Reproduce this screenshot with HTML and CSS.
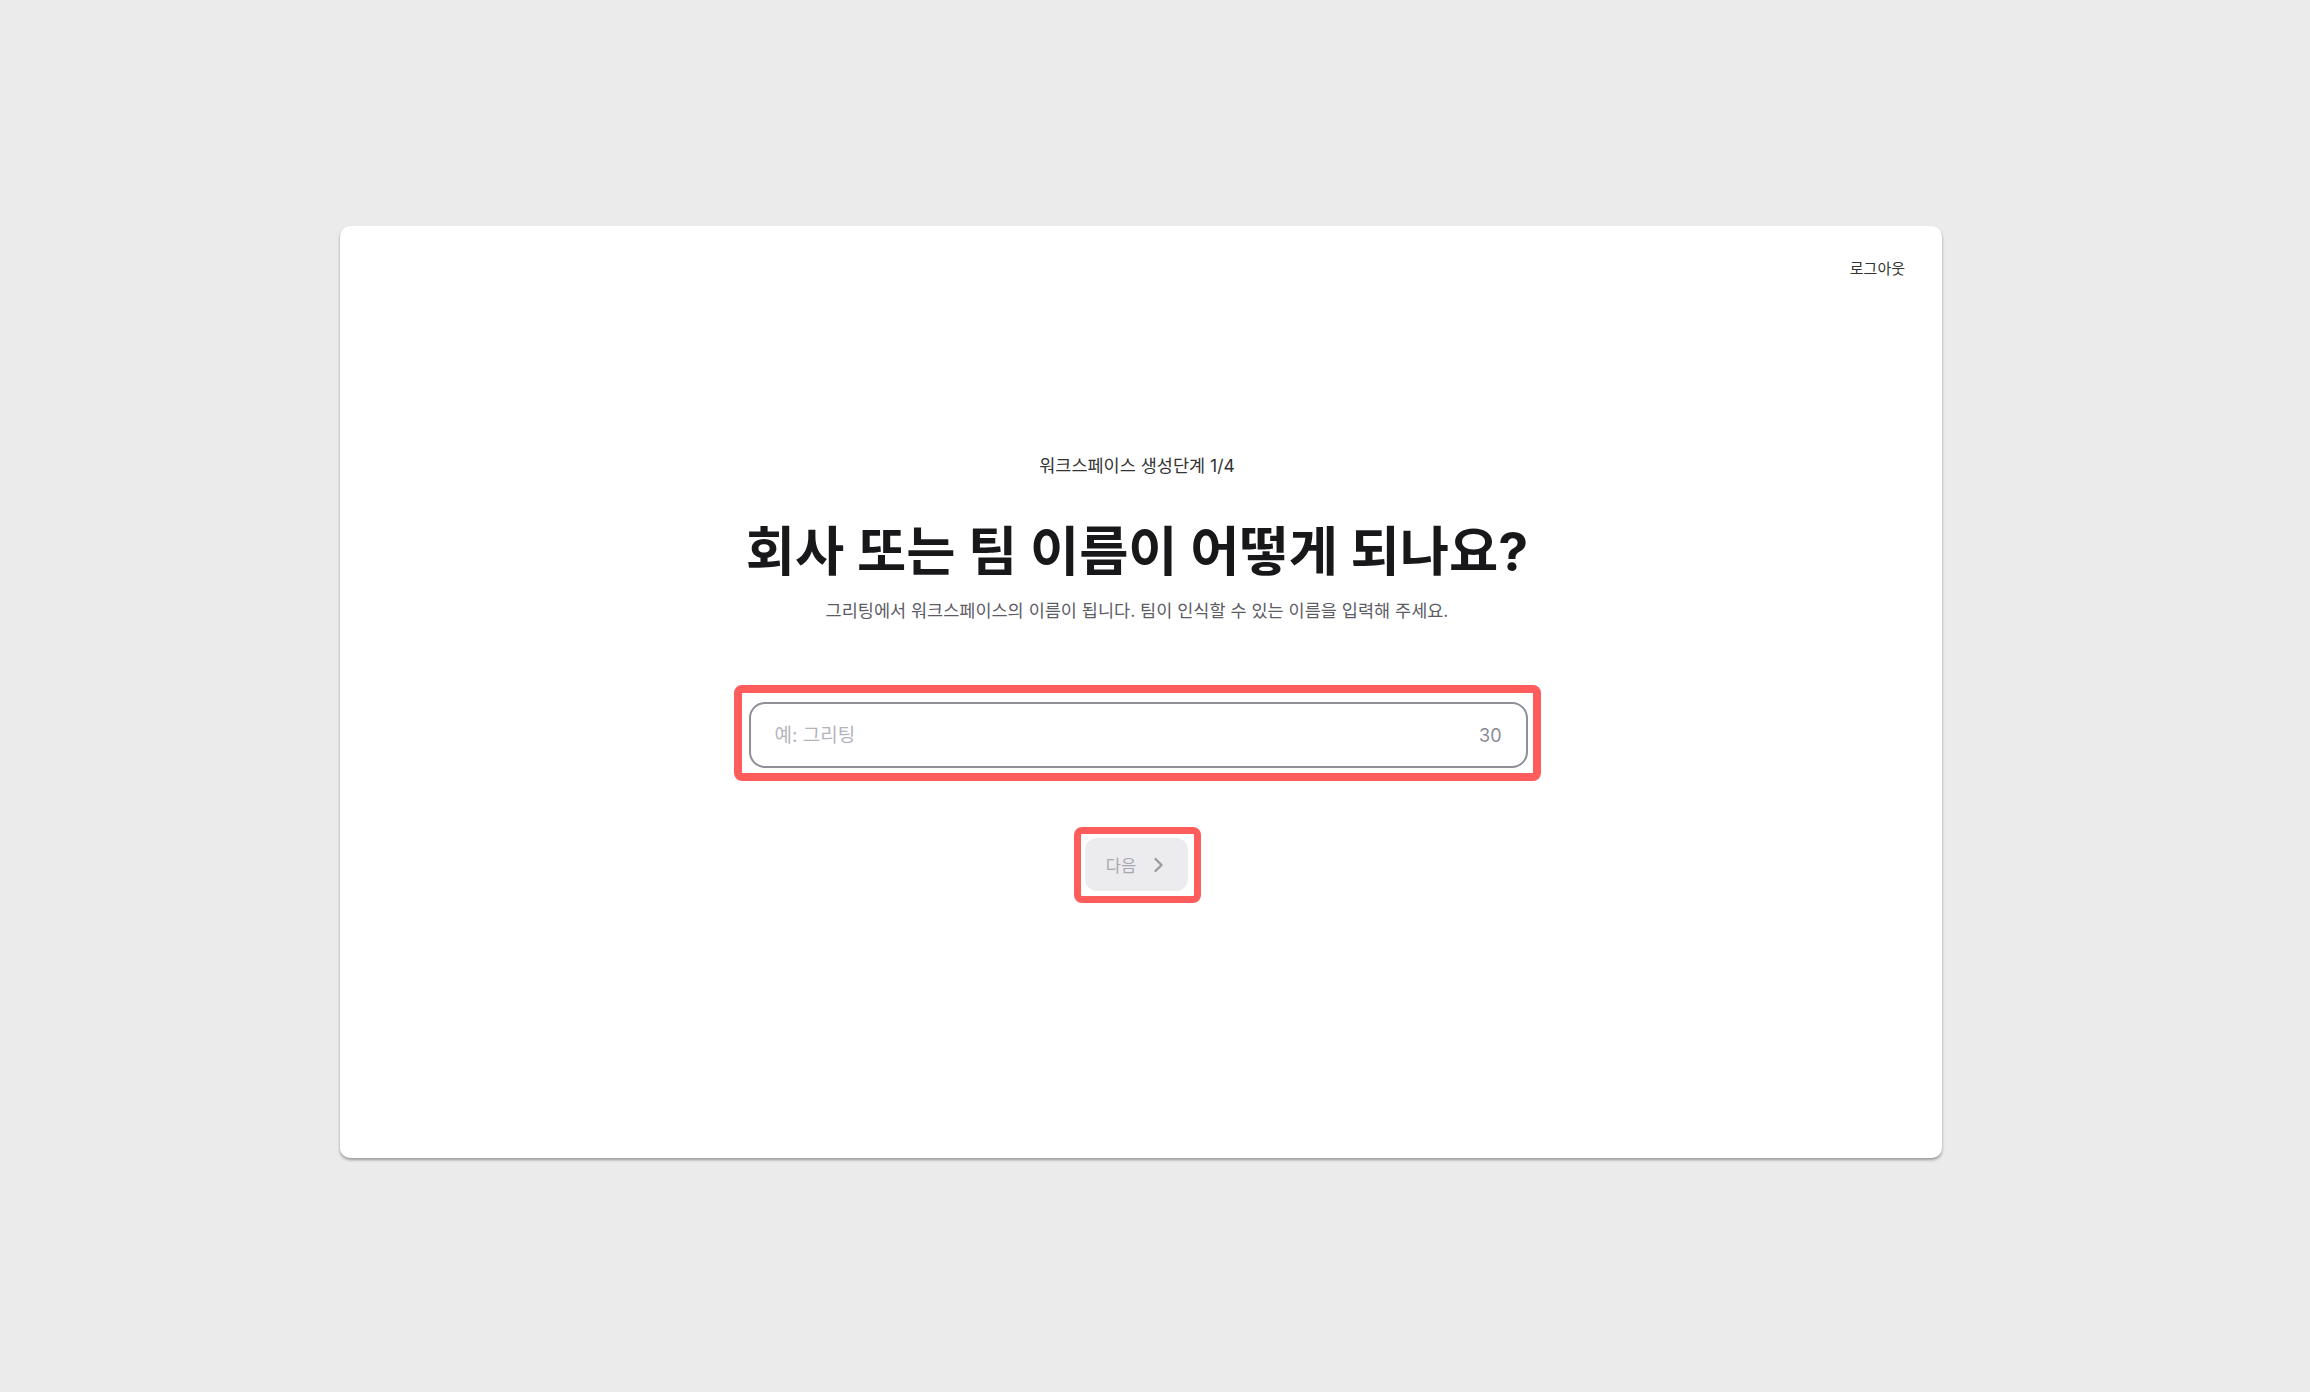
FILE: index.html
```html
<!DOCTYPE html>
<html lang="ko">
<head>
    <meta charset="UTF-8">
    <meta name="viewport" content="width=device-width, initial-scale=1.0">
    <title>워크스페이스 생성</title>
    <link rel="stylesheet" href="styles.css">
</head>
<body>
    <div class="card">
        <div class="card-header">
            <button class="logout-btn">로그아웃</button>
        </div>

        <div class="step">
            <p class="step-label">워크스페이스 생성단계 1/4</p>
            <h1>회사 또는 팀 이름이 어떻게 되나요?</h1>
            <p class="step-desc">그리팅에서 워크스페이스의 이름이 됩니다. 팀이 인식할 수 있는 이름을 입력해 주세요.</p>

            <div class="highlight input-highlight">
                <label class="name-field">
                    <input type="text" id="workspace-name" placeholder="예: 그리팅" maxlength="30">
                    <span class="char-count">30</span>
                </label>
            </div>

            <div class="highlight btn-highlight">
                <button class="next-btn" disabled>
                    다음
                    <svg width="12" height="16" viewBox="0 0 12 16" fill="none" stroke="currentColor" stroke-width="2.4" stroke-linecap="round" stroke-linejoin="round"><polyline points="2.5 2 8.5 8 2.5 14"></polyline></svg>
                </button>
            </div>
        </div>
    </div>
</body>
</html>
```

FILE: styles.css
```css
/* Reset */
* {
    margin: 0;
    padding: 0;
    box-sizing: border-box;
}

body {
    font-family: Inter, "Noto Sans CJK KR", sans-serif;
    background-color: #ebebeb;
    color: #222;
    min-height: 100vh;
    padding: 226px 0 0 340px;
}

.card {
    width: 1602px;
    height: 932px;
    background: #fff;
    border-radius: 10px;
    box-shadow: 0 2px 3px rgba(0, 0, 0, 0.35);
    padding: 33px 37px 0 37px;
    display: flex;
    flex-direction: column;
}

/* Header */
.card-header {
    display: flex;
    justify-content: flex-end;
}

.logout-btn {
    background: none;
    border: none;
    font-family: inherit;
    font-size: 15px;
    line-height: 20px;
    color: #333;
    cursor: pointer;
}

/* Step content */
.step {
    display: flex;
    flex-direction: column;
    align-items: center;
    margin-top: 176px;
    padding-right: 8px;
}

.step-label {
    font-size: 17.5px;
    line-height: 22px;
    color: #333;
}

h1 {
    margin-top: 43px;
    font-size: 53.5px;
    line-height: 64px;
    font-weight: 700;
    color: #18181b;
}

.step-desc {
    margin-top: 16px;
    font-size: 17.5px;
    line-height: 22px;
    color: #5c5c66;
}

/* Highlight boxes */
.highlight {
    border: 8px solid #ff5c5c;
    border-radius: 8px;
}

.input-highlight {
    margin-top: 63px;
    padding: 9px 5px 5px 7px;
}

.btn-highlight {
    margin-top: 46px;
    border-width: 7px;
    padding: 4px 6px 5px 4px;
}

/* Input */
.name-field {
    width: 779px;
    height: 66px;
    border: 2px solid #8f8f9a;
    border-radius: 16px;
    display: flex;
    align-items: center;
    padding: 0 24px 0 24px;
}

#workspace-name {
    flex-grow: 1;
    border: none;
    outline: none;
    font-family: inherit;
    font-size: 19px;
    color: #222;
    background: transparent;
}

#workspace-name::placeholder {
    color: #b4b4bc;
}

.char-count {
    font-size: 18px;
    color: #8a8a94;
}

/* Next button */
.next-btn {
    width: 103px;
    height: 53px;
    border: none;
    border-radius: 12px;
    background-color: #ececef;
    color: #a8a8b0;
    font-family: inherit;
    font-size: 16.5px;
    display: flex;
    align-items: center;
    justify-content: center;
    gap: 17px;
    padding-right: 1px;
}

.next-btn svg {
    color: #9c9ca4;
}
```
